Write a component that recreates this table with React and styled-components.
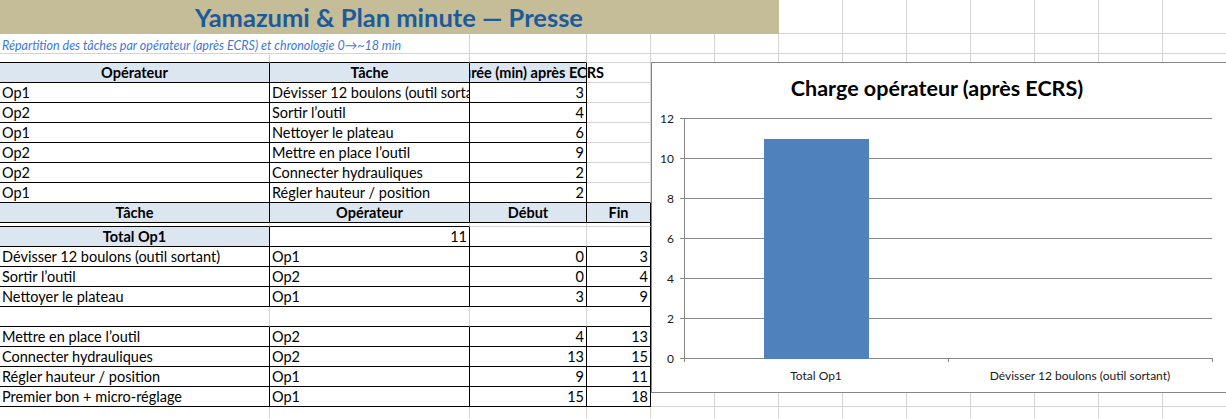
import React from 'react';
import styled, { createGlobalStyle } from 'styled-components';

const GRID = '#d4d4d4';
const INK = '#000';
const HEAD = '#dce6f1';
const TAN = '#c4bd97';

const COLS = [270, 200, 117, 64, 64, 64, 64, 64, 64, 64, 64, 64, 64];

const GlobalStyle = createGlobalStyle`
    html, body {
        margin: 0;
        padding: 0;
        background: #fff;
        overflow: hidden;
    }
    body {
        font-family: Lato, "Liberation Sans", sans-serif;
    }
`;

const Sheet = styled.div`
    position: relative;
    width: 1227px;
    height: 419px;
    overflow: hidden;
`;

const Row = styled.div`
    display: grid;
    grid-template-columns: ${COLS.map((w) => w + 'px').join(' ')};
    height: ${(p) => p.$h}px;
`;

const Cell = styled.div`
    grid-column: span ${(p) => p.$span || 1};
    box-sizing: border-box;
    display: flex;
    align-items: center;
    justify-content: ${(p) => (p.$align === 'right' ? 'flex-end' : p.$align === 'center' ? 'center' : 'flex-start')};
    padding: 1px 2px 0 2px;
    min-width: 0;
    border-right: 1px solid ${(p) => p.$r || GRID};
    border-bottom: 1px solid ${(p) => p.$b || GRID};
    background: ${(p) => p.$bg || 'transparent'};
    font-size: 14.5px;
    font-weight: ${(p) => (p.$bold ? 700 : 400)};
    color: #000;
    white-space: nowrap;
    overflow: ${(p) => (p.$spill ? 'visible' : 'hidden')};
    clip-path: ${(p) => (p.$spill ? 'inset(0 -80px 0 0)' : 'none')};
    line-height: 18px;
`;

const Title = styled(Cell)`
    font-size: 25.5px;
    line-height: 33px;
    padding: 1px 0 0 0;
    color: #1c5a9c;
`;

const Subtitle = styled(Cell)`
    font-size: 12.5px;
    font-style: italic;
    color: #3c78d8;
    align-items: flex-end;
    padding-bottom: 0;
    line-height: 15px;
`;

const Chart = styled.div`
    position: absolute;
    left: 651px;
    top: 62px;
    width: 580px;
    height: 331px;
    box-sizing: border-box;
    border: 1px solid #868686;
    background: #fff;
    display: flex;
    flex-direction: column;
`;

const ChartTitle = styled.div`
    height: 40px;
    box-sizing: border-box;
    padding: 12px 8px 0 0;
    text-align: center;
    font-size: 21.5px;
    font-weight: 700;
    line-height: 26px;
    color: #000;
`;

const Plot = styled.svg`
    display: block;
    font-family: Lato, "Liberation Sans", sans-serif;
    font-size: 12px;
`;

const head = (text) => ({ text, bold: true, align: 'center', bg: HEAD, r: INK, b: INK });
const box = (text, align) => ({ text, align, r: INK, b: INK });

const loadRows = [
    ['Op1', 'Dévisser 12 boulons (outil sortant)', 3],
    ['Op2', 'Sortir l’outil', 4],
    ['Op1', 'Nettoyer le plateau', 6],
    ['Op2', 'Mettre en place l’outil', 9],
    ['Op2', 'Connecter hydrauliques', 2],
    ['Op1', 'Régler hauteur / position', 2],
];

const planA = [
    ['Dévisser 12 boulons (outil sortant)', 'Op1', 0, 3],
    ['Sortir l’outil', 'Op2', 0, 4],
    ['Nettoyer le plateau', 'Op1', 3, 9],
];

const planB = [
    ['Mettre en place l’outil', 'Op2', 4, 13],
    ['Connecter hydrauliques', 'Op2', 13, 15],
    ['Régler hauteur / position', 'Op1', 9, 11],
    ['Premier bon + micro-réglage', 'Op1', 15, 18],
];

const planRow = ([task, op, start, end]) => ({
    h: 20,
    cells: [box(task), box(op), box(start, 'right'), box(end, 'right')],
});

const rows = [
    { h: 34, cells: [{ kind: 'title', span: 6, text: 'Yamazumi & Plan minute — Presse', align: 'center', bold: true, bg: TAN, r: TAN, b: TAN }] },
    { h: 20, cells: [{ kind: 'sub', span: 2, text: 'Répartition des tâches par opérateur (après ECRS) et chronologie 0→~18 min' }] },
    { h: 9, cells: [{ b: INK }, { b: INK }, { b: INK }] },
    { h: 20, cells: [head('Opérateur'), head('Tâche'), { ...head('Durée (min) après ECRS'), spill: true }] },
    ...loadRows.map(([op, task, dur], i) => ({
        h: 20,
        cells: [box(op), box(task), box(dur, 'right'), i === loadRows.length - 1 ? { b: INK } : {}],
    })),
    { h: 20, cells: [head('Tâche'), head('Opérateur'), head('Début'), head('Fin')] },
    { h: 4, cells: [{ b: INK }, { b: INK }, {}, { r: INK }] },
    { h: 20, cells: [head('Total Op1'), box(11, 'right'), { b: INK }, { r: INK, b: INK }] },
    ...planA.map(planRow),
    { h: 20, cells: [{ b: INK }, { b: INK }, { b: INK }, { r: INK, b: INK }] },
    ...planB.map(planRow),
    { h: 20, cells: [] },
];

function SheetRow({ h, cells }) {
    const used = cells.reduce((n, c) => n + (c.span || 1), 0);
    const filler = Array.from({ length: COLS.length - used }, () => ({}));
    return (
        <Row $h={h}>
            {[...cells, ...filler].map((c, i) => {
                const props = {
                    $span: c.span,
                    $align: c.align,
                    $bold: c.bold,
                    $bg: c.bg,
                    $r: c.r,
                    $b: c.b,
                    $spill: c.spill,
                };
                if (c.kind === 'title') return <Title key={i} {...props}>{c.text}</Title>;
                if (c.kind === 'sub') return <Subtitle key={i} {...props}>{c.text}</Subtitle>;
                return <Cell key={i} {...props}>{c.text}</Cell>;
            })}
        </Row>
    );
}

// plot coordinates are relative to the chart's inner box, below the title
const AXIS_X = 32;
const PLOT_END = 560;
const ZERO_Y = 255;
const STEP = 40;
const TICKS = [0, 2, 4, 6, 8, 10, 12];
const categories = [
    { label: 'Total Op1', value: 11 },
    { label: 'Dévisser 12 boulons (outil sortant)', value: 0 },
];

function LoadChart() {
    const slot = (PLOT_END - AXIS_X) / categories.length;
    return (
        <Chart>
            <ChartTitle>Charge opérateur (après ECRS)</ChartTitle>
            <Plot width="578" height="289">
                {TICKS.map((t) => {
                    const y = ZERO_Y - (t / 2) * STEP + 0.5;
                    return (
                        <g key={t}>
                            <line x1={AXIS_X - 4} x2={PLOT_END} y1={y} y2={y} stroke="#868686" />
                            <text x="22" y={y + 4} textAnchor="end" fill="#1a1a1a">{t}</text>
                        </g>
                    );
                })}
                <line x1={AXIS_X + 0.5} x2={AXIS_X + 0.5} y1={ZERO_Y - 6 * STEP} y2={ZERO_Y + 4} stroke="#868686" />
                {[0, 1, 2].map((i) => (
                    <line key={i} x1={AXIS_X + i * slot + 0.5} x2={AXIS_X + i * slot + 0.5} y1={ZERO_Y} y2={ZERO_Y + 4} stroke="#868686" />
                ))}
                {categories.map((c, i) => {
                    const cx = AXIS_X + slot * i + slot / 2;
                    const h = (c.value / 2) * STEP;
                    return (
                        <g key={c.label}>
                            {c.value > 0 && (
                                <rect x={cx - 52} y={ZERO_Y - h + 1} width="105" height={h} fill="#4f81bd" />
                            )}
                            <text x={cx} y={ZERO_Y + 22} textAnchor="middle" fill="#1a1a1a">{c.label}</text>
                        </g>
                    );
                })}
            </Plot>
        </Chart>
    );
}

export default function App() {
    return (
        <>
            <GlobalStyle />
            <Sheet>
                {rows.map((r, i) => (
                    <SheetRow key={i} {...r} />
                ))}
                <LoadChart />
            </Sheet>
        </>
    );
}
